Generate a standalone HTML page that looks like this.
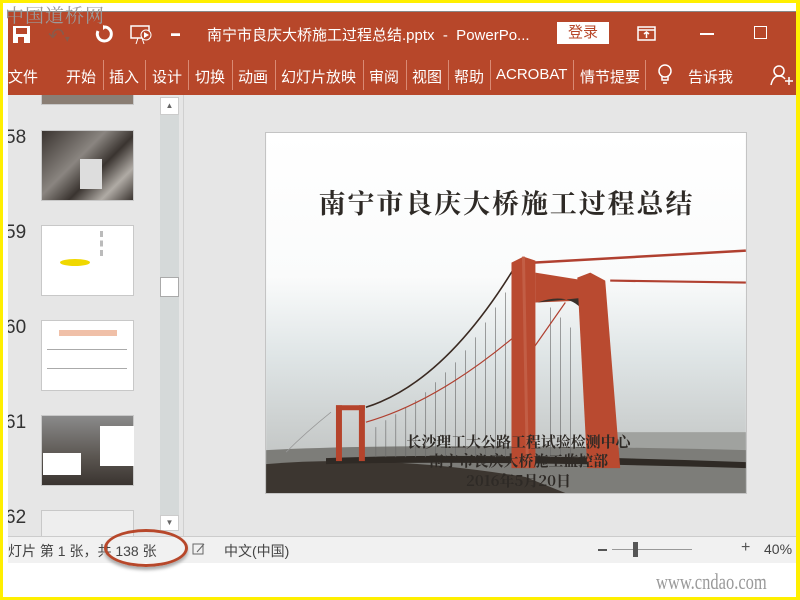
<!DOCTYPE html>
<html><head><meta charset="utf-8"><style>
*{margin:0;padding:0;box-sizing:border-box}
body{width:800px;height:600px;overflow:hidden;background:#fff;position:relative;font-family:"Liberation Sans","Noto Sans CJK SC",sans-serif}
.abs{position:absolute}
.tab{position:absolute;top:66px;color:#fff;font-size:15px}
.sep{position:absolute;top:60px;width:1px;height:30px;background:#d98a74}
.num{position:absolute;left:-3px;font-size:19px;color:#333}
.th{position:absolute;left:33px;width:93px;height:71px;border:1px solid #c8c8c8;background:#fff}
</style></head><body>
<div class="abs" style="left:0;top:0;width:800px;height:3px;background:#ffef00"></div>
<div class="abs" style="left:0;top:0;width:3px;height:600px;background:#ffef00"></div>
<div class="abs" style="right:0;top:0;width:4px;height:600px;background:#ffef00"></div>
<div class="abs" style="left:0;bottom:0;width:800px;height:3px;background:#ffef00"></div>
<div class="abs" style="left:8px;top:11px;width:788px;height:1px;background:#888"></div>
<div class="abs" style="left:5px;top:1px;font-size:19px;color:#9a9a9a;letter-spacing:1px;font-family:'Noto Serif CJK SC',serif;z-index:5">中国道桥网</div>
<div class="abs" style="left:8px;top:12px;width:788px;height:83px;background:#b7472a"></div>
<svg class="abs" style="left:12px;top:25px" width="20" height="20"><rect x="1" y="1" width="17" height="17" fill="#fff"/><rect x="4" y="3" width="11" height="6" fill="#b7472a"/><rect x="6" y="12" width="6" height="6" fill="#b7472a"/></svg>
<div class="abs" style="left:48px;top:23px;color:#8a5a4a;font-size:20px">↶<span style="font-size:10px">▾</span></div>
<svg class="abs" style="left:94px;top:24px" width="20" height="20"><path d="M10 3 A7 7 0 1 1 4 7" stroke="#fff" stroke-width="3" fill="none"/><path d="M9 1 L13 3 L9 6Z" fill="#fff"/></svg>
<svg class="abs" style="left:130px;top:24px" width="24" height="22"><rect x="1" y="2" width="18" height="12" stroke="#fff" fill="none" stroke-width="1.5"/><circle cx="16" cy="11" r="5" stroke="#fff" fill="#b7472a"/><path d="M14 8 L19 11 L14 14Z" fill="#fff"/><path d="M8 14 L6 20 M12 14 L14 20" stroke="#fff"/></svg>
<div class="abs" style="left:171px;top:28px;color:#fff;font-size:9px">▬</div>
<div class="abs" style="left:207px;top:24px;color:#fff;font-size:15px">南宁市良庆大桥施工过程总结.pptx&nbsp; - &nbsp;PowerPo...</div>
<div class="abs" style="left:557px;top:22px;width:52px;height:22px;background:#fff;color:#b7472a;font-size:15px;text-align:center;line-height:22px">登录</div>
<svg class="abs" style="left:637px;top:26px" width="20" height="16"><rect x="1" y="1" width="17" height="13" stroke="#fff" fill="none" stroke-width="1.5"/><path d="M1 4H18M9.5 12V6M7 8L9.5 6L12 8" stroke="#fff" fill="none" stroke-width="1.5"/></svg>
<div class="abs" style="left:700px;top:33px;width:14px;height:1.5px;background:#fff"></div>
<div class="abs" style="left:754px;top:26px;width:13px;height:13px;border:1.5px solid #fff"></div>
<div class="tab" style="left:8px">文件</div>
<div class="tab" style="left:66px">开始</div><div class="sep" style="left:103px"></div>
<div class="tab" style="left:109px">插入</div><div class="sep" style="left:145px"></div>
<div class="tab" style="left:152px">设计</div><div class="sep" style="left:188px"></div>
<div class="tab" style="left:195px">切换</div><div class="sep" style="left:232px"></div>
<div class="tab" style="left:238px">动画</div><div class="sep" style="left:275px"></div>
<div class="tab" style="left:281px">幻灯片放映</div><div class="sep" style="left:363px"></div>
<div class="tab" style="left:369px">审阅</div><div class="sep" style="left:406px"></div>
<div class="tab" style="left:412px">视图</div><div class="sep" style="left:448px"></div>
<div class="tab" style="left:454px">帮助</div><div class="sep" style="left:490px"></div>
<div class="tab" style="left:496px">ACROBAT</div><div class="sep" style="left:573px"></div>
<div class="tab" style="left:580px">情节提要</div><div class="sep" style="left:645px"></div>
<svg class="abs" style="left:657px;top:64px" width="16" height="22"><circle cx="8" cy="7" r="6" stroke="#fff" fill="none" stroke-width="1.5"/><path d="M5 12V16H11V12M6 19H10" stroke="#fff" fill="none" stroke-width="1.5"/></svg>
<div class="tab" style="left:688px">告诉我</div>
<svg class="abs" style="left:770px;top:65px" width="26" height="22"><circle cx="9" cy="6" r="5" stroke="#fff" fill="none" stroke-width="1.5"/><path d="M1 20 Q3 11 9 11 Q13 11 15 14M15 16H23M19 12V20" stroke="#fff" fill="none" stroke-width="1.5"/></svg>
<div class="abs" style="left:8px;top:95px;width:788px;height:442px;background:#e6e6e6"></div>
<div class="abs" style="left:8px;top:95px;width:150px;height:442px;overflow:hidden">
<div class="th" style="top:0;height:10px;border-top:none;background:#8a7e74"></div>
<div class="num" style="top:32px">58</div>
<div class="th" style="top:35px;background:linear-gradient(135deg,#3a3430 0%,#8a8580 40%,#3a3430 60%,#b0aba5 80%,#3a3430)"><div style="position:absolute;left:38px;top:28px;width:22px;height:30px;background:#ddd"></div></div>
<div class="num" style="top:127px">59</div>
<div class="th" style="top:130px"><div style="position:absolute;left:18px;top:33px;width:30px;height:7px;background:#f0d800;border-radius:50%"></div><div style="position:absolute;left:58px;top:5px;width:18px;height:25px;border-left:3px dashed #bbb"></div></div>
<div class="num" style="top:222px">60</div>
<div class="th" style="top:225px"><div style="position:absolute;left:17px;top:9px;width:58px;height:6px;background:#f0c0a8"></div><div style="position:absolute;left:5px;top:28px;width:80px;height:20px;border-top:1px solid #aaa;border-bottom:1px solid #aaa"></div></div>
<div class="num" style="top:317px">61</div>
<div class="th" style="top:320px;background:linear-gradient(180deg,#8a8a8a,#5a5550 60%,#3a3430)"><div style="position:absolute;left:58px;top:10px;width:34px;height:40px;background:#fff"></div><div style="position:absolute;left:1px;top:37px;width:38px;height:22px;background:#fff"></div></div>
<div class="num" style="top:412px">62</div>
<div class="th" style="top:415px;height:27px;border-bottom:none;background:#eee"></div>
</div>
<div class="abs" style="left:183px;top:95px;width:1px;height:442px;background:#d0d0d0"></div>
<div class="abs" style="left:8px;top:536px;width:788px;height:1px;background:#ccc"></div>
<div class="abs" style="left:160px;top:97px;width:19px;height:434px;background:#d5d9d9"></div>
<div class="abs" style="left:160px;top:97px;width:19px;height:18px;background:#fff;border:1px solid #ccc;font-size:8px;color:#666;text-align:center;line-height:16px">▲</div>
<div class="abs" style="left:160px;top:277px;width:19px;height:20px;background:#fff;border:1px solid #aaa"></div>
<div class="abs" style="left:160px;top:515px;width:19px;height:16px;background:#fff;border:1px solid #ccc;font-size:8px;color:#666;text-align:center;line-height:14px">▼</div>
<svg class="abs" style="left:265px;top:132px;border:1px solid #c4c4c4" width="482" height="362" viewBox="0 0 481 361">
<defs><linearGradient id="sky" x1="0" y1="0" x2="0" y2="1"><stop offset="0" stop-color="#fff"/><stop offset="0.4" stop-color="#fafbfb"/><stop offset="0.62" stop-color="#dfe5e6"/><stop offset="0.9" stop-color="#c3c6c5"/><stop offset="1" stop-color="#9a9a96"/></linearGradient></defs>
<rect width="481" height="361" fill="url(#sky)"/>
<rect x="350" y="300" width="131" height="30" fill="#a0a29f"/>
<path d="M0 318 Q150 310 481 318 L481 361 L0 361Z" fill="#7d7d79"/>
<path d="M0 332 Q120 322 260 345 L300 361 L0 361Z" fill="#3c3630"/>
<path d="M60 326 Q200 320 481 330 L481 336 Q200 328 60 332Z" fill="#2f2a25"/>
<g stroke="#666" stroke-width="0.6">
<path d="M110 295V325M120 288V325M130 282V325M140 275V325M150 268V325M160 260V325M170 250V325M180 240V325M190 230V325M200 218V325M210 205V325M220 190V325M230 175V325M240 160V325M285 175V325M295 185V325M305 195V325M330 240V325"/>
</g>
<path d="M100 275 Q180 250 252 130" stroke="#3a2a22" stroke-width="1.6" fill="none"/>
<path d="M100 290 Q170 270 248 205" stroke="#b04030" stroke-width="1.2" fill="none"/>
<path d="M268 130 L481 118" stroke="#b04030" stroke-width="2.5"/>
<path d="M345 148 L481 150" stroke="#b04030" stroke-width="2.2"/>
<path d="M265 220 L300 170" stroke="#b04030" stroke-width="1.2"/>
<path d="M65 280 Q40 300 20 320" stroke="#999" stroke-width="0.8" fill="none"/>
<rect x="70" y="273" width="6" height="56" fill="#b5432b"/><rect x="93" y="273" width="6" height="56" fill="#b5432b"/><rect x="70" y="273" width="29" height="5" fill="#b5432b"/>
<path d="M246 130 L258 124 L270 128 L270 336 L246 336Z" fill="#b94a30"/>
<path d="M258 124 L262 336" stroke="#c25e45" stroke-width="3"/>
<path d="M270 140 L320 148 L320 168 L270 170Z" fill="#b94a30"/>
<path d="M272 170 Q300 160 315 175 L320 178 L320 165Z" fill="#3a302a"/>
<path d="M312 145 L325 140 L340 148 L355 336 L322 336Z" fill="#b94a30"/>
<text x="241" y="80" text-anchor="middle" font-family="'Noto Serif CJK SC',serif" font-size="27" font-weight="bold" fill="#2e2a26" letter-spacing="2">南宁市良庆大桥施工过程总结</text>
<g font-family="'Noto Serif CJK SC',serif" font-size="15" fill="#2e2a26" font-weight="bold" text-anchor="middle">
<text x="253" y="315">长沙理工大公路工程试验检测中心</text>
<text x="253" y="334">南宁市良庆大桥施工监控部</text>
<text x="253" y="354">2016年5月20日</text>
</g>
</svg>
<div class="abs" style="left:8px;top:537px;width:788px;height:26px;background:#f1f1f1"></div>
<div class="abs" style="left:8px;top:541px;font-size:14px;color:#444">灯片 第 1 张，共 138 张</div>
<div class="abs" style="left:104px;top:529px;width:84px;height:38px;border:3px solid #b7472a;border-radius:50%;box-shadow:0 3px 3px #aaa"></div>
<svg class="abs" style="left:192px;top:542px" width="14" height="14"><rect x="1" y="2" width="10" height="10" stroke="#666" fill="none"/><path d="M5 10L12 2" stroke="#666"/></svg>
<div class="abs" style="left:224px;top:541px;font-size:14px;color:#444">中文(中国)</div>
<div class="abs" style="left:598px;top:549px;width:9px;height:2px;background:#555"></div>
<div class="abs" style="left:612px;top:549px;width:80px;height:1px;background:#999"></div>
<div class="abs" style="left:633px;top:542px;width:5px;height:15px;background:#555"></div>
<div class="abs" style="left:741px;top:539px;font-size:16px;color:#555">+</div>
<div class="abs" style="left:764px;top:541px;font-size:14px;color:#444">40%</div>
<div class="abs" style="left:656px;top:569px;font-size:22px;color:#999;font-family:'Liberation Serif',serif;transform:scaleX(0.75);transform-origin:left">www.cndao.com</div>
</body></html>
